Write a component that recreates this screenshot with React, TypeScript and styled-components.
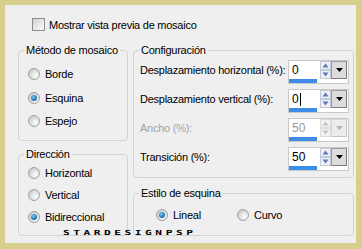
import React, { useId } from 'react';
import styled, { createGlobalStyle } from 'styled-components';

const GlobalStyle = createGlobalStyle`
  html, body {
    margin: 0;
    padding: 0;
    background: #d7cf8e;
  }
  body {
    font-family: "Liberation Sans", Arial, sans-serif;
    font-size: 11px;
    letter-spacing: -0.25px;
    color: #000;
  }
`;

const Frame = styled.div`
  width: 362px;
  height: 249px;
  box-sizing: border-box;
  padding: 5px 6px 6px 5px;
  background: #d7cf8e;
`;

const Panel = styled.div`
  position: relative;
  width: 351px;
  height: 238px;
  box-sizing: border-box;
  padding: 13px 0 0 13px;
  background: #efefef;
`;

const CheckRow = styled.label`
  display: flex;
  align-items: center;
  gap: 4px;
  height: 13px;
  margin-left: 14px;
`;

const CheckBox = styled.span`
  width: 13px;
  height: 13px;
  box-sizing: border-box;
  border: 1px solid #8d8d8d;
  background: linear-gradient(135deg, #d2d2ce 0%, #ecece9 60%, #fafafa 100%);
`;

const Columns = styled.div`
  display: flex;
  gap: 5px;
  margin-top: 13px;
`;

const Column = styled.div<{ $gap: number }>`
  display: flex;
  flex-direction: column;
  gap: ${p => p.$gap}px;
`;

const Group = styled.fieldset<{ $w: number; $h: number }>`
  margin: 0;
  min-width: 0;
  width: ${p => p.$w}px;
  height: ${p => p.$h}px;
  box-sizing: border-box;
  padding: 0;
  border: 1px solid #d3d4d0;
  border-radius: 4px;
`;

const Legend = styled.legend`
  margin-left: 5px;
  padding: 0 2px;
  line-height: 13px;
  font-size: 11px;
  white-space: nowrap;
`;

const GroupBody = styled.div<{ $pad: string }>`
  padding: ${p => p.$pad};
`;

const RadioList = styled.div<{ $gap: number }>`
  display: flex;
  flex-direction: column;
  gap: ${p => p.$gap}px;
`;

const RadioRow = styled.label<{ $w?: number }>`
  display: flex;
  align-items: center;
  gap: 5px;
  height: 14px;
  ${p => (p.$w ? `width: ${p.$w}px;` : '')}
`;

const InlineRadios = styled.div`
  display: flex;
  align-items: center;
`;

const ConfigList = styled.div`
  display: flex;
  flex-direction: column;
  gap: 5px;
`;

const ConfigRow = styled.div`
  display: flex;
  justify-content: space-between;
  align-items: flex-start;
  height: 24px;
`;

const ConfigLabel = styled.span<{ $disabled?: boolean }>`
  line-height: 18px;
  padding-top: 1px;
  color: ${p => (p.$disabled ? '#a3a3a3' : '#000')};
`;

const Control = styled.div`
  display: flex;
  align-items: flex-start;
  width: 61px;
  height: 24px;
  box-sizing: border-box;
  border: 1px solid #c8c8c8;
  background: #fff;
`;

const Field = styled.div`
  display: flex;
  flex-direction: column;
  width: 31px;
  height: 22px;
`;

const Value = styled.div<{ $disabled?: boolean }>`
  display: flex;
  align-items: center;
  height: 18px;
  padding-left: 3px;
  font-size: 12px;
  letter-spacing: 0;
  color: ${p => (p.$disabled ? '#9a9a9a' : '#000')};
`;

const Caret = styled.span`
  width: 1px;
  height: 13px;
  margin-left: 1px;
  background: #000;
`;

const Bar = styled.div`
  width: 28px;
  height: 4px;
  background: #3b8de8;
`;

const Spin = styled.div`
  width: 11px;
  height: 18px;
`;

const DropButton = styled.div<{ $disabled?: boolean }>`
  display: flex;
  align-items: center;
  justify-content: center;
  width: 16px;
  height: 18px;
  box-sizing: border-box;
  border: 1px solid ${p => (p.$disabled ? '#c4c4c4' : '#7c7c7c')};
  border-top-color: ${p => (p.$disabled ? '#d8d8d8' : '#9a9a9a')};
  border-left-color: ${p => (p.$disabled ? '#d8d8d8' : '#9a9a9a')};
  background: ${p => (p.$disabled ? '#ececec' : '#dcdcdc')};
`;

const Watermark = styled.div`
  position: absolute;
  left: 58px;
  top: 224px;
  font-family: "DejaVu Sans Mono", monospace;
  font-weight: bold;
  font-size: 7px;
  line-height: 8px;
  letter-spacing: 2.2px;
  color: #000;
  transform: scaleX(1.6);
  transform-origin: left center;
`;

const Radio: React.FC<{ checked?: boolean }> = ({ checked }) => {
  const id = useId().replace(/:/g, '');
  return (
    <svg width="12" height="12" viewBox="0 0 12 12">
      <defs>
        <radialGradient id={`bg${id}`} cx="0.65" cy="0.65" r="0.7">
          <stop offset="0" stopColor="#ffffff" />
          <stop offset="1" stopColor="#c9c9c9" />
        </radialGradient>
        <radialGradient id={`dot${id}`} cx="0.4" cy="0.35" r="0.7">
          <stop offset="0" stopColor="#7cc6f5" />
          <stop offset="1" stopColor="#0a5c9c" />
        </radialGradient>
      </defs>
      <circle cx="6" cy="6" r="5.5" fill={`url(#bg${id})`} stroke="#a2a2a2" />
      {checked && <circle cx="6" cy="6" r="3" fill={`url(#dot${id})`} />}
    </svg>
  );
};

const SpinArrows: React.FC<{ disabled?: boolean }> = ({ disabled }) => {
  const arrow = disabled ? '#c2c2c2' : '#5a78c4';
  const edge = disabled ? '#dcdcdc' : '#c3c9d6';
  return (
    <svg width="11" height="18" viewBox="0 0 11 18">
      <rect x="0.5" y="0.5" width="10" height="8" fill="#eef0f4" stroke={edge} />
      <rect x="0.5" y="9.5" width="10" height="8" fill="#eef0f4" stroke={edge} />
      <path d="M5.5 2.5 L8.5 6.5 L2.5 6.5 Z" fill={arrow} />
      <path d="M2.5 11.5 L8.5 11.5 L5.5 15.5 Z" fill={arrow} />
    </svg>
  );
};

const NumberControl: React.FC<{ value: string; caret?: boolean; disabled?: boolean }> = ({ value, caret, disabled }) => (
  <Control>
    <Field>
      <Value $disabled={disabled}>
        {value}
        {caret && <Caret />}
      </Value>
      <Bar />
    </Field>
    <Spin>
      <SpinArrows disabled={disabled} />
    </Spin>
    <DropButton $disabled={disabled}>
      <svg width="7" height="4" viewBox="0 0 7 4">
        <path d="M0 0 L7 0 L3.5 4 Z" fill={disabled ? '#b4b4b4' : '#000'} />
      </svg>
    </DropButton>
  </Control>
);

const configRows = [
  { label: 'Desplazamiento horizontal (%):', value: '0' },
  { label: 'Desplazamiento vertical (%):', value: '0', caret: true },
  { label: 'Ancho (%):', value: '50', disabled: true },
  { label: 'Transición (%):', value: '50' },
];

export default function App() {
  return (
    <>
      <GlobalStyle />
      <Frame>
        <Panel>
          <CheckRow>
            <CheckBox />
            Mostrar vista previa de mosaico
          </CheckRow>
          <Columns>
            <Column $gap={7}>
              <Group $w={110} $h={97}>
                <Legend>Método de mosaico</Legend>
                <GroupBody $pad="10px 9px 0">
                  <RadioList $gap={9.5}>
                    <RadioRow><Radio />Borde</RadioRow>
                    <RadioRow><Radio checked />Esquina</RadioRow>
                    <RadioRow><Radio />Espejo</RadioRow>
                  </RadioList>
                </GroupBody>
              </Group>
              <Group $w={110} $h={88}>
                <Legend>Dirección</Legend>
                <GroupBody $pad="5px 9px 0">
                  <RadioList $gap={8}>
                    <RadioRow><Radio />Horizontal</RadioRow>
                    <RadioRow><Radio />Vertical</RadioRow>
                    <RadioRow><Radio checked />Bidireccional</RadioRow>
                  </RadioList>
                </GroupBody>
              </Group>
            </Column>
            <Column $gap={9}>
              <Group $w={221} $h={134}>
                <Legend>Configuración</Legend>
                <GroupBody $pad="3px 4px 0 6px">
                  <ConfigList>
                    {configRows.map(r => (
                      <ConfigRow key={r.label}>
                        <ConfigLabel $disabled={r.disabled}>{r.label}</ConfigLabel>
                        <NumberControl value={r.value} caret={r.caret} disabled={r.disabled} />
                      </ConfigRow>
                    ))}
                  </ConfigList>
                </GroupBody>
              </Group>
              <Group $w={221} $h={49}>
                <Legend>Estilo de esquina</Legend>
                <GroupBody $pad="8px 0 0 22px">
                  <InlineRadios>
                    <RadioRow $w={81}><Radio checked />Lineal</RadioRow>
                    <RadioRow><Radio />Curvo</RadioRow>
                  </InlineRadios>
                </GroupBody>
              </Group>
            </Column>
          </Columns>
          <Watermark>STARDESIGNPSP</Watermark>
        </Panel>
      </Frame>
    </>
  );
}
